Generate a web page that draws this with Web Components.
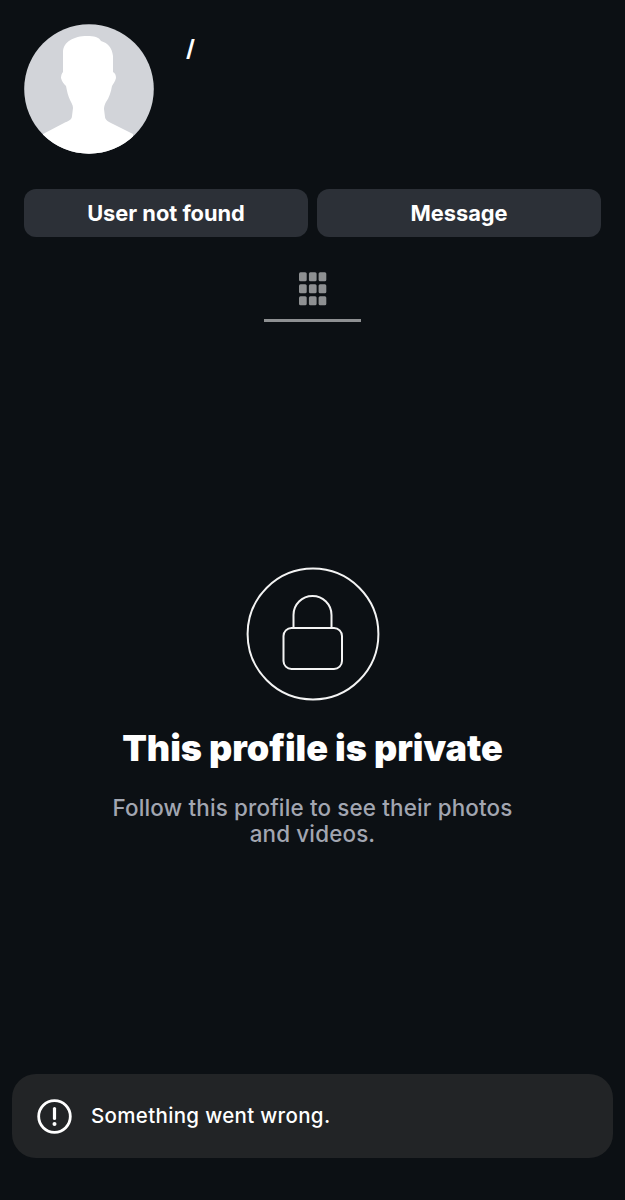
<!DOCTYPE html>
<html lang="en"><head><meta charset="utf-8"><title>Profile</title>
<style>
html,body{margin:0;padding:0;background:#0c1014;}
body{font-family:Inter,"Liberation Sans",sans-serif;color:#fff;}
</style></head>
<body>
<profile-page>
  <profile-header slot="header" name="/"></profile-header>
  <div slot="actions" style="display:contents">
    <action-button>User not found</action-button>
    <action-button>Message</action-button>
  </div>
  <grid-tab slot="tabs"></grid-tab>
  <private-notice slot="main"></private-notice>
  <toast-bar slot="toast">Something went wrong.</toast-bar>
</profile-page>
<script>
function def(name, html){
  customElements.define(name, class extends HTMLElement{
    constructor(){super();this.attachShadow({mode:'open'}).innerHTML=html;}
  });
}
def('profile-page',`<style>
:host{display:flex;flex-direction:column;width:625px;height:1200px;box-sizing:border-box;background:#0c1014;overflow:hidden}
.actions{display:grid;grid-template-columns:284px 284px;gap:9px;padding:35px 24px 0}
.main{flex:1;display:flex;flex-direction:column}
</style>
<slot name="header"></slot>
<div class="actions"><slot name="actions"></slot></div>
<slot name="tabs"></slot>
<div class="main"><slot name="main"></slot></div>
<slot name="toast"></slot>`);
customElements.define('profile-header', class extends HTMLElement{
  constructor(){super();this.attachShadow({mode:'open'}).innerHTML=`<style>
:host{display:flex;padding:24px 24px 0;gap:32px;align-items:flex-start}
svg{width:130px;height:130px;display:block;flex:none}
.n{font:700 23px/28px Inter,"Liberation Sans",sans-serif;color:#fff;margin-top:11px}
</style>
<svg viewBox="0 0 130 130" aria-hidden="true"><defs><clipPath id="c"><circle cx="65" cy="65" r="64.8"/></clipPath></defs>
<circle cx="65" cy="65" r="64.8" fill="#d2d4d9"/>
<path clip-path="url(#c)" fill="#fff" d="M39 48 L39 28 C39 18 50 12 63 12 C70 12 75 13 77 17 C84 19 88 24 89 32 L89 48 C91 49 92 51 92 54 C91 58 89 60 88 62 C87 68 85 74 82 78 C81 80 80 82 80 85 L81 93 C81 96 85 98 89 100 L109 110 L109 135 L19 135 L19 110 L40 99 C44 97 48 96 48 92 L49 84 C49 81 47 78 46 76 C44 72 43 67 42 62 C40 60 38 58 37 54 C37 51 38 49 39 48Z"/>
</svg>
<div class="n">${this.getAttribute('name')||''}</div>`;}
});
def('action-button',`<style>
:host{display:flex;align-items:center;justify-content:center;height:48px;border-radius:12px;background:#2c3037;color:#fff;font:700 21.8px/48px Inter,"Liberation Sans",sans-serif}
</style><slot></slot>`);
def('grid-tab',`<style>
:host{display:flex;justify-content:center;padding-top:34px}
.t{width:97px;height:51px;box-sizing:border-box;border-bottom:3px solid #8e9092;display:flex;justify-content:center;padding-top:1px}
svg{width:29px;height:34px;display:block}
</style><div class="t"><svg viewBox="0 0 29 34" fill="#8e9092" aria-hidden="true">
<rect x="1" y="0.3" width="7.7" height="9" rx="1.5"/><rect x="10.9" y="0.3" width="7.7" height="9" rx="1.5"/><rect x="20.6" y="0.3" width="7.7" height="9" rx="1.5"/>
<rect x="1" y="12.3" width="7.7" height="9" rx="1.5"/><rect x="10.9" y="12.3" width="7.7" height="9" rx="1.5"/><rect x="20.6" y="12.3" width="7.7" height="9" rx="1.5"/>
<rect x="1" y="24.3" width="7.7" height="9" rx="1.5"/><rect x="10.9" y="24.3" width="7.7" height="9" rx="1.5"/><rect x="20.6" y="24.3" width="7.7" height="9" rx="1.5"/>
</svg></div>`);
def('private-notice',`<style>
:host{display:flex;flex-direction:column;align-items:center;padding-top:245px;text-align:center}
svg{width:134px;height:134px;display:block}
h1{margin:23px 0 0;font:900 36px/48px Inter,"Liberation Sans",sans-serif;color:#fff;letter-spacing:-.03px}
p{margin:23px 0 0;width:420px;font:450 22.4px/26px Inter,"Liberation Sans",sans-serif;color:#a2a6b1;letter-spacing:.16px}
</style>
<svg viewBox="0 0 134 134" fill="none" stroke="#f4f4f4" stroke-width="2" aria-hidden="true">
<circle cx="67" cy="67" r="65.4"/>
<path d="M47.5 61 V48 A19 19 0 0 1 85.5 48 V61"/>
<rect x="37.5" y="61" width="58.5" height="41" rx="8"/>
</svg>
<h1>This profile is private</h1>
<p>Follow this profile to see their photos and videos.</p>`);
def('toast-bar',`<style>
:host{display:flex;align-items:center;gap:19px;margin:0 12px 42px;height:84px;box-sizing:border-box;padding-left:25px;border-radius:24px;background:#222426;color:#fff;font:500 20.5px/26px Inter,"Liberation Sans",sans-serif;letter-spacing:.33px}
svg{width:35px;height:35px;display:block;flex:none}
</style>
<svg viewBox="0 0 35 35" aria-hidden="true"><circle cx="17.5" cy="17.5" r="15.8" fill="none" stroke="#fff" stroke-width="2.8"/>
<path d="M17.5 9.5 V19.5" stroke="#fff" stroke-width="3.2" stroke-linecap="round" fill="none"/><circle cx="17.5" cy="25" r="2" fill="#fff"/></svg>
<slot></slot>`);
</script>
</body></html>
